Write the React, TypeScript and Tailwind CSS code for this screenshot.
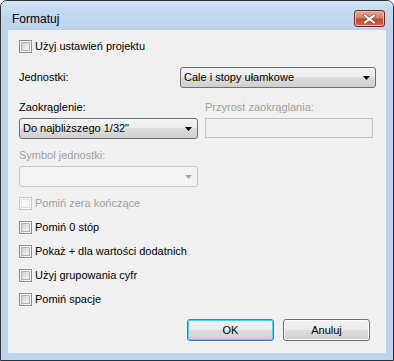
import React from 'react';

function Arrow({ disabled = false }: { disabled?: boolean }) {
  return (
    <svg width="7" height="4" viewBox="0 0 7 4" className="shrink-0">
      <path d="M0 0h7L3.5 4z" fill={disabled ? '#a7a7a7' : '#000'} />
    </svg>
  );
}

function CheckBox({ label, disabled = false }: { label: string; disabled?: boolean }) {
  return (
    <div className="flex items-center h-4">
      <span
        className={`w-[13px] h-[13px] shrink-0 border p-px ${
          disabled ? 'border-[#c6c6c6] bg-[#f7f7f7]' : 'border-[#8e8f8f] bg-[#f4f4f4]'
        }`}
      >
        <span
          className={`block w-full h-full border ${
            disabled
              ? 'border-[#dedede] bg-[#f6f6f6]'
              : 'border-[#aeb3b9] bg-[linear-gradient(135deg,#cfcfcf_0%,#e7e7e7_55%,#f8f8f8_100%)]'
          }`}
        />
      </span>
      <span className={`ml-[3px] text-[11px] leading-none ${disabled ? 'text-[#a0a0a0]' : 'text-black'}`}>
        {label}
      </span>
    </div>
  );
}

function Combo({ value, width, disabled = false }: { value?: string; width: string; disabled?: boolean }) {
  return (
    <div
      className={`${width} h-[21px] flex items-center justify-between pl-[3px] pr-[5px] rounded-[3px] border text-[11px] ${
        disabled
          ? 'border-[#c9c9c9] bg-[#f4f4f4]'
          : 'border-[#707070] bg-[linear-gradient(#f2f2f2_0%,#ebebeb_50%,#dddddd_50%,#cfcfcf_100%)]'
      }`}
    >
      <span className="leading-none">{value}</span>
      <Arrow disabled={disabled} />
    </div>
  );
}

function Button({ label, isDefault = false }: { label: string; isDefault?: boolean }) {
  return (
    <div
      className={`w-[87px] h-[22px] rounded-[3px] border flex items-center justify-center text-[11px] bg-[linear-gradient(#f2f2f2_0%,#ebebeb_50%,#dddddd_50%,#cfcfcf_100%)] ${
        isDefault
          ? 'border-[#3c7fb1] shadow-[inset_0_0_0_1px_#48d5f7]'
          : 'border-[#707070] shadow-[inset_0_0_0_1px_#fcfcfc]'
      }`}
    >
      {label}
    </div>
  );
}

export default function App() {
  return (
    <div className="w-[394px] h-[361px] flex flex-col border border-[#2e3338] rounded-t-[7px] bg-[#bcd4ed] font-['Liberation_Sans',Arial,sans-serif] text-black overflow-hidden">
      {/* Title bar */}
      <div className="h-[29px] flex items-start justify-between pl-[11px] pr-[8px] bg-[linear-gradient(#d3e4f5_0%,#c2d9f0_40%,#bbd3ec_100%)]">
        <span className="mt-[11px] text-[12px] leading-[15px]">Formatuj</span>
        <div className="mt-[9px] w-[31px] h-[17px] rounded-[3px] border border-[#6c2a22] flex items-center justify-center bg-[linear-gradient(#e9a797_0%,#d9806b_45%,#c2452c_55%,#d26a4f_100%)] shadow-[inset_0_0_0_1px_#eebdb0]">
          <svg width="13" height="10" viewBox="0 0 13 10">
            <path d="M2 1.5l9 7M11 1.5l-9 7" stroke="#7a4a44" strokeWidth="3.4" strokeLinecap="square" />
            <path d="M2 1.5l9 7M11 1.5l-9 7" stroke="#fff" strokeWidth="2" strokeLinecap="square" />
          </svg>
        </div>
      </div>

      {/* Client area */}
      <div className="flex-1 mx-[7px] mb-[7px] bg-[#f0f0f0] pl-[11px] pt-[8px] flex flex-col">
        <CheckBox label="Użyj ustawień projektu" />

        <div className="mt-[13px] flex items-center">
          <span className="w-[161px] text-[11px]">Jednostki:</span>
          <Combo value="Cale i stopy ułamkowe" width="w-[196px]" />
        </div>

        <div className="mt-[12px] h-[15px] flex items-center text-[11px]">
          <span className="w-[186px]">Zaokrąglenie:</span>
          <span className="text-[#a0a0a0]">Przyrost zaokrąglania:</span>
        </div>
        <div className="mt-[3px] flex items-start">
          <Combo value={'Do najbliższego 1/32"'} width="w-[179px]" />
          <div className="ml-[7px] w-[168px] h-[20px] border border-[#c2c2c2] bg-[#f0f0f0]" />
        </div>

        <div className="mt-[9px] h-[15px] flex items-center text-[11px] text-[#a0a0a0]">Symbol jednostki:</div>
        <div className="mt-[3px]">
          <Combo width="w-[179px]" disabled />
        </div>

        <div className="mt-[8px] flex flex-col gap-2">
          <CheckBox label="Pomiń zera kończące" disabled />
          <CheckBox label="Pomiń 0 stóp" />
          <CheckBox label="Pokaż + dla wartości dodatnich" />
          <CheckBox label="Użyj grupowania cyfr" />
          <CheckBox label="Pomiń spacje" />
        </div>

        <div className="mt-[12px] flex justify-end gap-[9px] pr-[16px]">
          <Button label="OK" isDefault />
          <Button label="Anuluj" />
        </div>
      </div>
    </div>
  );
}
